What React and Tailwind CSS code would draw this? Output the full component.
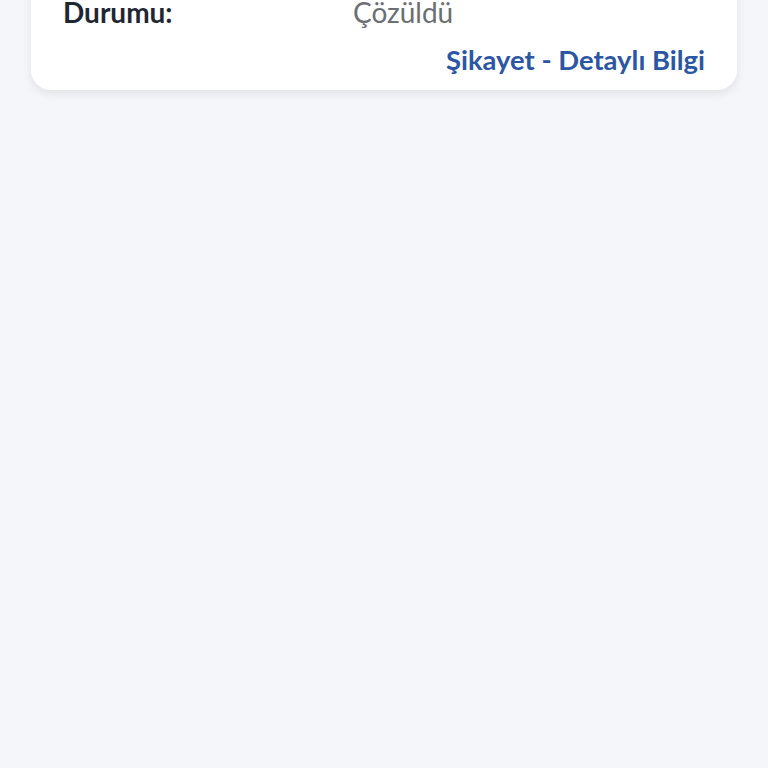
const App = () => {
  return (
    <div className="h-screen w-full overflow-hidden bg-[#f4f6f9] px-[31px]" style={{ fontFamily: "Lato, 'Noto Sans', sans-serif" }}>
      <div className="-mt-5 rounded-b-[20px] bg-white px-8 pt-4 pb-[14px] shadow-[0_4px_10px_rgba(0,0,0,0.08)]">
        <div className="flex h-8 items-center text-[28px]">
          <span className="w-[290px] font-bold text-[#1f2733]">Durumu:</span>
          <span className="text-[#6b6e73]">Çözüldü</span>
        </div>
        <div className="mt-4 flex h-8 items-center justify-end">
          <a className="text-[27.4px] font-bold text-[#2b56a3]">Şikayet - Detaylı Bilgi</a>
        </div>
      </div>
    </div>
  );
};

export default App;
